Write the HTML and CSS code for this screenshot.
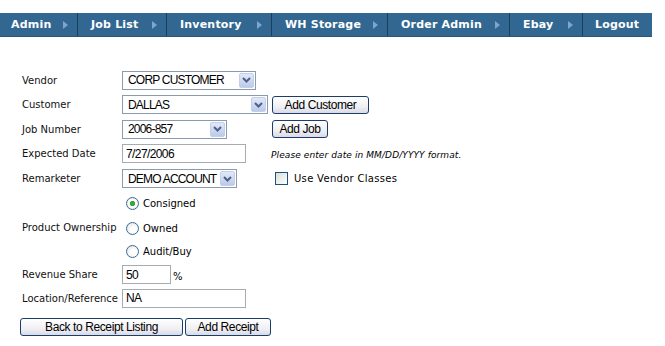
FILE: index.html
```html
<!DOCTYPE html>
<html lang="en">
<head>
    <meta charset="UTF-8">
    <title>Add Receipt</title>
    <link rel="stylesheet" href="styles.css">
</head>
<body>
<ul class="nav">
    <li class="nav-admin"><a href="#">Admin</a><span class="arrow"></span></li>
    <li class="nav-jobs"><a href="#">Job List</a><span class="arrow"></span></li>
    <li class="nav-inv"><a href="#">Inventory</a><span class="arrow"></span></li>
    <li class="nav-wh"><a href="#">WH Storage</a><span class="arrow"></span></li>
    <li class="nav-order"><a href="#">Order Admin</a><span class="arrow"></span></li>
    <li class="nav-ebay"><a href="#">Ebay</a><span class="arrow"></span></li>
    <li class="nav-logout"><a href="#">Logout</a></li>
</ul>

<form class="receipt">
    <div class="grid">
        <label class="lbl r1">Vendor</label>
        <div class="select w-vendor r1"><span>CORP CUSTOMER</span><i class="drop"><svg width="9" height="6" viewBox="0 0 9 6"><path d="M1 1l3.5 3.5L8 1" fill="none" stroke="#4d6185" stroke-width="2"/></svg></i></div>

        <label class="lbl r2">Customer</label>
        <div class="select w-customer r2"><span>DALLAS</span><i class="drop"><svg width="9" height="6" viewBox="0 0 9 6"><path d="M1 1l3.5 3.5L8 1" fill="none" stroke="#4d6185" stroke-width="2"/></svg></i></div>
        <div class="extra r2"><button type="button" class="btn w-addcust">Add Customer</button></div>

        <label class="lbl r3">Job Number</label>
        <div class="select w-job r3"><span>2006-857</span><i class="drop"><svg width="9" height="6" viewBox="0 0 9 6"><path d="M1 1l3.5 3.5L8 1" fill="none" stroke="#4d6185" stroke-width="2"/></svg></i></div>
        <div class="extra r3"><button type="button" class="btn w-addjob">Add Job</button></div>

        <label class="lbl r4">Expected Date</label>
        <div class="field r4"><input type="text" class="txt w-long" value="7/27/2006"></div>
        <div class="extra hint r4">Please enter date in MM/DD/YYYY format.</div>

        <label class="lbl r5">Remarketer</label>
        <div class="select w-remark r5"><span>DEMO ACCOUNT</span><i class="drop"><svg width="9" height="6" viewBox="0 0 9 6"><path d="M1 1l3.5 3.5L8 1" fill="none" stroke="#4d6185" stroke-width="2"/></svg></i></div>
        <label class="extra check r5"><input type="checkbox">Use Vendor Classes</label>

        <label class="lbl r-own">Product Ownership</label>
        <label class="opt r6"><input type="radio" name="own" checked>Consigned</label>
        <label class="opt r7"><input type="radio" name="own">Owned</label>
        <label class="opt r8"><input type="radio" name="own">Audit/Buy</label>

        <label class="lbl r9">Revenue Share</label>
        <div class="opt r9"><input type="text" class="txt w-short" value="50"><span class="pct">%</span></div>

        <label class="lbl r10">Location/Reference</label>
        <div class="field r10"><input type="text" class="txt w-long" value="NA"></div>
    </div>

    <div class="actions">
        <button type="button" class="btn w-back">Back to Receipt Listing</button>
        <button type="button" class="btn w-add">Add Receipt</button>
    </div>
</form>
</body>
</html>
```

FILE: styles.css
```css
body {
    margin: 0;
    background: #fff;
    font-family: "DejaVu Sans", Verdana, sans-serif;
    font-size: 10px;
    color: #000;
}

/* top menu */
.nav {
    display: flex;
    width: 652px;
    height: 24px;
    margin: 13px 0 0;
    padding: 0;
    list-style: none;
    background: #326791;
    border-bottom: 1px solid #2a5779;
    box-sizing: border-box;
}

.nav li {
    display: flex;
    align-items: center;
    justify-content: space-between;
    padding: 0 9px 0 13px;
    border-right: 1px solid #1d3e58;
    box-sizing: border-box;
}

.nav a {
    color: #fff;
    font-weight: bold;
    font-size: 11px;
    letter-spacing: 0.2px;
    text-decoration: none;
}

.nav .arrow {
    width: 0;
    height: 0;
    border-top: 4px solid transparent;
    border-bottom: 4px solid transparent;
    border-left: 5px solid #7ea6cc;
}

.nav-admin { width: 78px; padding-left: 11px !important; }
.nav-jobs { width: 89px; }
.nav-inv { width: 105px; }
.nav-wh { width: 116px; }
.nav-order { width: 122px; }
.nav-ebay { width: 73px; }
.nav-logout { width: 69px; border-right: none !important; padding-left: 12px !important; }

/* form grid */
.receipt {
    margin: 31px 0 0 22px;
}

.grid {
    display: grid;
    grid-template-columns: 100px 149px auto;
    grid-template-rows: 24px 25px 24px 25px 25px 25px 24px 23px 23px 24px;
    align-items: center;
}

.lbl { grid-column: 1; color: #111; }
.r1 { grid-row: 1; }
.r2 { grid-row: 2; }
.r3 { grid-row: 3; }
.r4 { grid-row: 4; }
.r5 { grid-row: 5; }
.r6 { grid-row: 6; }
.r7 { grid-row: 7; }
.r8 { grid-row: 8; }
.r9 { grid-row: 9; }
.r10 { grid-row: 10; }
.r-own { grid-row: 6 / 9; }

.extra { grid-column: 3; }

.select, .opt, .field { grid-column: 2; }

.select {
    display: flex;
    align-items: center;
    justify-content: space-between;
    height: 19px;
    padding-left: 5px;
    border: 1px solid #8a9bb0;
    box-sizing: border-box;
    background: #fff;
    font-family: "Liberation Sans", Arial, sans-serif;
    font-size: 12px;
    letter-spacing: -0.8px;
}

.drop {
    display: flex;
    align-items: center;
    justify-content: center;
    width: 15px;
    height: 15px;
    margin-right: 1px;
    box-sizing: border-box;
    border: 1px solid #c3cfe9;
    border-radius: 2px;
    background: linear-gradient(#e1e8f8, #bccaea);
}

.w-vendor { width: 134px; }
.w-customer { width: 146px; }
.w-job { width: 105px; }
.w-remark { width: 115px; }

.txt {
    display: block;
    height: 19px;
    margin: 0;
    padding: 0 3px;
    border: 1px solid #a5acb2;
    box-sizing: border-box;
    font-family: "Liberation Sans", Arial, sans-serif;
    font-size: 12px;
    letter-spacing: -0.6px;
    color: #000;
    outline: none;
}

.w-long { width: 124px; }
.w-short { width: 49px; }

.pct {
    margin-left: 2px;
    font-size: 10px;
    padding-top: 4px;
}

.btn {
    height: 18px;
    margin: 0;
    padding: 0 6px;
    border: 1px solid #1c3c6b;
    border-radius: 3px;
    background: linear-gradient(#ffffff, #f0f0f4 60%, #d9dae6);
    font-family: "Liberation Sans", Arial, sans-serif;
    font-size: 12px;
    letter-spacing: -0.4px;
    color: #000;
    box-sizing: border-box;
}

.w-addcust { width: 97px; margin-left: 1px; }
.w-addjob { width: 56px; margin-left: 1px; }

.hint {
    font-style: italic;
    font-size: 9px;
    letter-spacing: 0.1px;
    padding-top: 2px;
}

.check, .opt {
    display: flex;
    align-items: center;
}

.check {
    letter-spacing: 0.3px;
}

.check input {
    appearance: none;
    width: 13px;
    height: 13px;
    margin: 0 6px 0 4px;
    border: 1px solid #1c5180;
    background: linear-gradient(135deg, #dcdcd7, #fff);
}

.opt input[type="radio"] {
    appearance: none;
    width: 13px;
    height: 13px;
    margin: 0 4px 0 4px;
    border: 1px solid #3b6a96;
    border-radius: 50%;
    background: radial-gradient(circle at 60% 60%, #fff 30%, #dcdcd7);
    box-sizing: border-box;
}

.opt input[type="radio"]:checked {
    background: radial-gradient(circle, #3fb43f 0, #2aa22a 2.2px, #fff 3px, #fff 45%, #dcdcd7);
}

.actions {
    display: flex;
    gap: 2px;
    margin: 8px 0 0 -2px;
}

.w-back { width: 163px; }
.w-add { width: 86px; }
```
